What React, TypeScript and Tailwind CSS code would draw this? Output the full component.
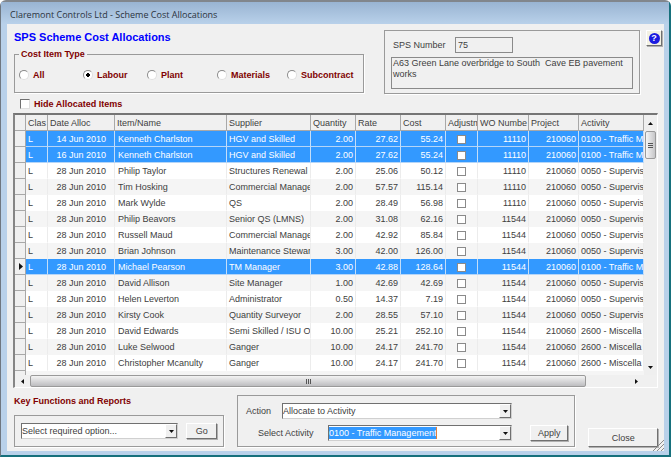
import React from 'react'

type Row = {
  date: string
  name: string
  supplier: string
  qty: string
  rate: string
  cost: string
  wo: string
  activity: string
  selected?: boolean
  current?: boolean
}

const rows: Row[] = [
  { date: '14 Jun 2010', name: 'Kenneth Charlston', supplier: 'HGV and Skilled', qty: '2.00', rate: '27.62', cost: '55.24', wo: '11110', activity: '0100 - Traffic M', selected: true },
  { date: '16 Jun 2010', name: 'Kenneth Charlston', supplier: 'HGV and Skilled', qty: '2.00', rate: '27.62', cost: '55.24', wo: '11110', activity: '0100 - Traffic M', selected: true },
  { date: '28 Jun 2010', name: 'Philip Taylor', supplier: 'Structures Renewal', qty: '2.00', rate: '25.06', cost: '50.12', wo: '11110', activity: '0050 - Supervis' },
  { date: '28 Jun 2010', name: 'Tim Hosking', supplier: 'Commercial Manage', qty: '2.00', rate: '57.57', cost: '115.14', wo: '11110', activity: '0050 - Supervis' },
  { date: '28 Jun 2010', name: 'Mark Wylde', supplier: 'QS', qty: '2.00', rate: '28.49', cost: '56.98', wo: '11110', activity: '0050 - Supervis' },
  { date: '28 Jun 2010', name: 'Philip Beavors', supplier: 'Senior QS (LMNS)', qty: '2.00', rate: '31.08', cost: '62.16', wo: '11544', activity: '0050 - Supervis' },
  { date: '28 Jun 2010', name: 'Russell Maud', supplier: 'Commercial Manage', qty: '2.00', rate: '42.92', cost: '85.84', wo: '11544', activity: '0050 - Supervis' },
  { date: '28 Jun 2010', name: 'Brian Johnson', supplier: 'Maintenance Stewar', qty: '3.00', rate: '42.00', cost: '126.00', wo: '11544', activity: '0050 - Supervis' },
  { date: '28 Jun 2010', name: 'Michael Pearson', supplier: 'TM Manager', qty: '3.00', rate: '42.88', cost: '128.64', wo: '11544', activity: '0100 - Traffic M', selected: true, current: true },
  { date: '28 Jun 2010', name: 'David Allison', supplier: 'Site Manager', qty: '1.00', rate: '42.69', cost: '42.69', wo: '11544', activity: '0050 - Supervis' },
  { date: '28 Jun 2010', name: 'Helen Leverton', supplier: 'Administrator', qty: '0.50', rate: '14.37', cost: '7.19', wo: '11544', activity: '0050 - Supervis' },
  { date: '28 Jun 2010', name: 'Kirsty Cook', supplier: 'Quantity Surveyor', qty: '2.00', rate: '28.55', cost: '57.10', wo: '11544', activity: '0050 - Supervis' },
  { date: '28 Jun 2010', name: 'David Edwards', supplier: 'Semi Skilled / ISU O', qty: '10.00', rate: '25.21', cost: '252.10', wo: '11544', activity: '2600 - Miscella' },
  { date: '28 Jun 2010', name: 'Luke Selwood', supplier: 'Ganger', qty: '10.00', rate: '24.17', cost: '241.70', wo: '11544', activity: '2600 - Miscella' },
  { date: '28 Jun 2010', name: 'Christopher Mcanulty', supplier: 'Ganger', qty: '10.00', rate: '24.17', cost: '241.70', wo: '11544', activity: '2600 - Miscella' },
]

const headers = ['Clas', 'Date Alloc', 'Item/Name', 'Supplier', 'Quantity', 'Rate', 'Cost', 'Adjustm', 'WO Numbe', 'Project', 'Activity']
const types = ['All', 'Labour', 'Plant', 'Materials', 'Subcontract']

const panel = 'border border-[#9a9a9a] shadow-[1px_1px_0_#fff]'
const raised = 'border border-t-white border-l-white border-r-[#707070] border-b-[#707070] shadow-[1px_1px_0_#b0b0b0]'
const sunken = 'border border-t-[#707070] border-l-[#707070] border-r-[#d0d0d0] border-b-[#d0d0d0] bg-white'

const Arrow = ({ d, className }: { d: string; className?: string }) => (
  <svg viewBox="0 0 7 7" width="7" height="7" className={className} aria-hidden="true">
    <path d={d} fill="#111" />
  </svg>
)

const DropArrow = () => (
  <span className="pointer-events-none flex h-full w-3 shrink-0 items-center justify-center border border-t-white border-l-white border-r-[#707070] border-b-[#707070] bg-[#f0f0f0]">
    <Arrow d="M1 2h5L3.500 5z" />
  </span>
)

const Cell = ({ children, selected, pad = 'pl-[3px]' }: { children?: React.ReactNode; selected?: boolean; pad?: string }) => (
  <td
    className={`h-4 overflow-hidden whitespace-nowrap border-r border-b pt-0.5 pb-0 leading-[13px] ${pad} ${selected ? 'border-r-[#c4def8] border-b-[#b4d5f8]' : 'border-r-[#ececec] border-b-transparent'}`}
  >
    {children}
  </td>
)

const right = 'pr-0.5 text-right'

const Grid = () => (
  <section className="mt-[3px] flex flex-col border-t-2 border-l-2 border-r border-b border-t-[#757575] border-l-[#858585] border-r-white border-b-white bg-[#f0f0f0]">
    <div className="flex">
      <div className="min-w-0 flex-1 overflow-hidden">
        <table className="w-full table-fixed border-separate border-spacing-0">
          <colgroup>
            <col className="w-[11px]" />
            <col className="w-[22px]" />
            <col className="w-[67px]" />
            <col className="w-[112px]" />
            <col className="w-[84px]" />
            <col className="w-[45px]" />
            <col className="w-[45px]" />
            <col className="w-[45px]" />
            <col className="w-[32px]" />
            <col className="w-[51px]" />
            <col className="w-[50px]" />
            <col />
          </colgroup>
          <thead>
            <tr className="bg-[#f0f0f0]">
              <th className="h-4 border-r border-b border-[#a8a8a8] p-0"></th>
              {headers.map((h) => (
                <th key={h} className="h-4 overflow-hidden whitespace-nowrap border-r border-b border-[#a8a8a8] pt-0.5 pr-0 pb-0 pl-0.5 text-left font-normal leading-[13px]">
                  {h}
                </th>
              ))}
            </tr>
          </thead>
          <tbody>
            {rows.map((r, i) => (
              <tr key={i} className={r.selected ? 'bg-[#3399ff] text-white' : i % 2 ? 'bg-[#f5f5f5]' : 'bg-white'}>
                <td className="h-4 border-r border-b border-[#a8a8a8] bg-[#f0f0f0] p-0">
                  {r.current && <Arrow d="M2 0L6 3.500L2 7z" className="ml-0.5" />}
                </td>
                <Cell selected={r.selected} pad="px-0.5">L</Cell>
                <Cell selected={r.selected} pad="pr-2 text-right">{r.date}</Cell>
                <Cell selected={r.selected}>{r.name}</Cell>
                <Cell selected={r.selected} pad="pl-0.5">{r.supplier}</Cell>
                <Cell selected={r.selected} pad={right}>{r.qty}</Cell>
                <Cell selected={r.selected} pad={right}>{r.rate}</Cell>
                <Cell selected={r.selected} pad={right}>{r.cost}</Cell>
                <Cell selected={r.selected} pad="px-0">
                  <input
                    type="checkbox"
                    aria-label={`Adjustment for ${r.name}`}
                    className="mx-auto block size-[9px] appearance-none border border-[#8a8a8a] bg-white checked:bg-[#333]"
                  />
                </Cell>
                <Cell selected={r.selected} pad={right}>{r.wo}</Cell>
                <Cell selected={r.selected} pad={right}>210060</Cell>
                <Cell selected={r.selected} pad="pl-0.5">{r.activity}</Cell>
              </tr>
            ))}
            <tr className="bg-[#f5f5f5]">
              <td className="h-1 border-r border-[#a8a8a8] bg-[#f0f0f0] p-0"></td>
              <td colSpan={11} className="h-1 p-0"></td>
            </tr>
          </tbody>
        </table>
      </div>
      <div className="flex w-[13px] flex-col items-center bg-[#efefef]">
        <div className="flex h-4 items-center">
          <Arrow d="M1 5h5L3.500 2z" />
        </div>
        <div className="flex h-7 w-[11px] flex-col items-center justify-center gap-px rounded-xs border border-[#9a9a9a] bg-linear-to-r from-[#f6f6f6] to-[#c6c6c8]">
          <span className="h-px w-[5px] bg-[#555]"></span>
          <span className="h-px w-[5px] bg-[#555]"></span>
          <span className="h-px w-[5px] bg-[#555]"></span>
        </div>
        <div className="mt-auto flex h-4 items-center">
          <Arrow d="M1 2h5L3.500 5z" />
        </div>
      </div>
    </div>
    <div className="flex h-3 pr-[13px]">
      <div className="flex w-[15px] items-center justify-center">
        <Arrow d="M5 1v5L2 3.500z" />
      </div>
      <div className="flex flex-1 items-center justify-center gap-px rounded-xs border border-[#9a9a9a] bg-linear-to-b from-[#f4f4f4] to-[#bdbdc0]">
        <span className="h-[5px] w-px bg-[#555]"></span>
        <span className="h-[5px] w-px bg-[#555]"></span>
        <span className="h-[5px] w-px bg-[#555]"></span>
      </div>
      <div className="flex w-[58px] items-center justify-end pr-1">
        <Arrow d="M2 1v5L5 3.500z" />
      </div>
    </div>
  </section>
)

const App = () => {
  return (
    <div className="w-full rounded-t-md border-t-2 border-r-2 border-b-2 border-l border-t-[#81868c] border-l-[#6f7780] border-r-[#16707c] border-b-[#16707c] bg-[#b9d1ea] pr-[5px] pb-1 pl-1.5 font-['Liberation_Sans',Arial,sans-serif] text-[9px] leading-3 text-[#404040]">
      <header className="-mr-[5px] -ml-1.5 flex h-[22px] items-center bg-linear-to-b from-[#99b4d2] to-[#b9d1ea] pt-1 pl-[9px] font-['Open_Sans',sans-serif] text-[#2a3340]">
        <h1>Claremont Controls Ltd - Scheme Cost Allocations</h1>
      </header>

      <main className="relative bg-[#f0f0f0] pt-1.5 pr-1.5 pb-1 pl-1.5">

        <div className="-mr-1 flex items-start">
          <div className="min-w-0 flex-1 pl-px">
            <h2 className="text-[11px] font-bold leading-[14px] text-[#0000ff]">SPS Scheme Cost Allocations</h2>
            <fieldset className={`mt-[3px] h-[46px] min-w-0 px-1 text-[#800000] ${panel}`}>
              <legend className="px-0.5 font-bold leading-[14px]">Cost Item Type</legend>
              <div className="mt-2 grid grid-cols-[64px_64px_70px_70px_auto] font-bold">
                {types.map((t) => (
                  <label key={t} className="flex items-center gap-1">
                    <input
                      type="radio"
                      name="costType"
                      defaultChecked={t === 'Labour'}
                      className="size-[10px] appearance-none rounded-full border border-[#8a8a8a] border-r-[#e0e0e0] border-b-[#e0e0e0] bg-white checked:bg-[radial-gradient(circle,#000_2px,#fff_2px)]"
                    />
                    {t}
                  </label>
                ))}
              </div>
            </fieldset>
            <label className="mt-[5px] flex h-3 w-fit items-center gap-1 pl-1.5 font-bold text-[#800000]">
              <input type="checkbox" className="size-[10px] appearance-none border border-[#707070] border-r-[#e0e0e0] border-b-[#e0e0e0] bg-white checked:bg-[#333]" />
              Hide Allocated Items
            </label>
          </div>

          <div className={`ml-5 h-16 w-[256px] px-1.5 pt-1.5 ${panel}`}>
            <div className="flex items-center pl-0.5">
              <label htmlFor="spsNumber" className="w-[62px]">SPS Number</label>
              <input id="spsNumber" readOnly value="75" className="h-4 w-[58px] border border-[#8a8a8a] bg-[#f0f0f0] pl-0.5" />
            </div>
            <textarea
              readOnly
              aria-label="Scheme description"
              value={'A63 Green Lane overbridge to South  Cave EB pavement works'}
              className="mt-1 block h-8 w-full resize-none overflow-hidden border border-[#8a8a8a] bg-[#f0f0f0] pl-px leading-[11px]"
            />
          </div>

          <button aria-label="Help" className={`ml-1.5 flex size-4 items-center justify-center bg-[#f3f1e4] ${raised}`}>
            <span className="flex size-[11px] items-center justify-center rounded-full bg-[#1c1ce0] font-bold leading-none text-white">?</span>
          </button>
        </div>

        <Grid />

        <footer className="flex items-end pt-[7px] pl-px">
          <section className="w-[210px]">
            <h3 className="mb-2 font-bold text-[#800000]">Key Functions and Reports</h3>
            <div className={`flex h-8 items-center gap-2 px-1.5 ${panel}`}>
              <div className={`flex h-4 w-[159px] items-center ${sunken}`}>
                <select aria-label="Report" className="h-full min-w-0 flex-1 appearance-none">
                  <option>Select required option...</option>
                </select>
                <DropArrow />
              </div>
              <button className={`h-4 w-[31px] ${raised}`}>Go</button>
            </div>
          </section>

          <section className={`ml-[13px] flex h-[52px] w-[340px] items-end pr-1.5 pb-[5px] pl-2 ${panel}`}>
            <div className="flex flex-col gap-1.5">
              <div className="flex items-center">
                <label htmlFor="action" className="w-9">Action</label>
                <div className={`flex h-4 w-[230px] items-center ${sunken}`}>
                  <select id="action" className="h-full min-w-0 flex-1 appearance-none">
                    <option>Allocate to Activity</option>
                  </select>
                  <DropArrow />
                </div>
              </div>
              <div className="flex items-center pl-3">
                <label htmlFor="activity" className="w-[70px]">Select Activity</label>
                <div className={`flex h-4 w-[184px] items-center justify-between ${sunken}`}>
                  <select id="activity" className="h-3 appearance-none border-r border-[#e08040] bg-[#3399ff] leading-3 text-white [field-sizing:content]">
                    <option>0100 - Traffic Management</option>
                  </select>
                  <DropArrow />
                </div>
              </div>
            </div>
            <button className={`ml-auto h-4 w-[38px] ${raised}`}>Apply</button>
          </section>

          <button className={`ml-[13px] h-[19px] w-[70px] ${raised}`}>Close</button>
        </footer>

        <svg viewBox="0 0 11 11" className="absolute right-0 bottom-0 size-[11px]" aria-hidden="true">
          <path d="M0 11L11 0M4 11L11 4M8 11L11 8" stroke="#8a8a8a" fill="none" />
        </svg>
      </main>
    </div>
  )
}

export default App
